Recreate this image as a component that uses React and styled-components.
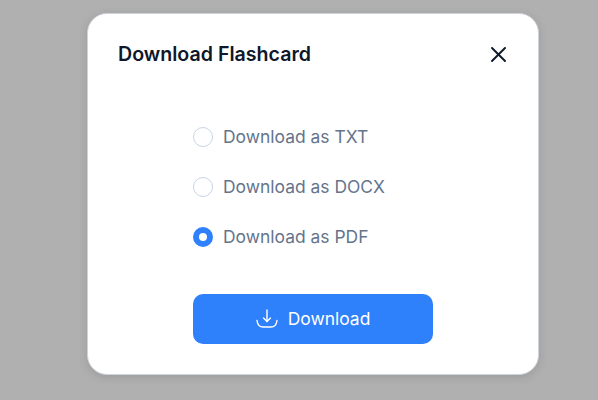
import React from "react";
import styled, { createGlobalStyle } from "styled-components";

const Global = createGlobalStyle`
  html, body { margin: 0; padding: 0; background: #b0b0b0; }
  * { box-sizing: border-box; }
`;
const Overlay = styled.div`
  width: 598px; height: 400px; overflow: hidden;
  background: #b0b0b0;
  padding: 13px 0 0 87px;
  font-family: Inter, "Liberation Sans", sans-serif;
`;
const Modal = styled.div`
  width: 452px; height: 362px;
  background: #fff;
  border-radius: 20px;
  border: 1px solid #cfd4dc;
  box-shadow: 0 2px 8px rgba(60, 60, 60, 0.18);
  padding: 28px 28px 30px 30px;
  display: flex; flex-direction: column;
`;
const Header = styled.div`
  display: flex; align-items: center; justify-content: space-between;
  height: 24px;
`;
const Title = styled.h2`
  margin: 0;
  font-size: 19.6px; line-height: 24px; font-weight: 600; color: #0f172a;
  letter-spacing: 0;
`;
const Close = styled.button`
  all: unset; display: flex; width: 24px; height: 24px;
  align-items: center; justify-content: center; color: #0f172a;
`;
const Body = styled.div`
  margin: 61px 0 0 75px;
  width: 240px;
  display: flex; flex-direction: column;
`;
const Options = styled.div`
  display: flex; flex-direction: column; gap: 30px;
`;
const Option = styled.label`
  display: flex; align-items: center; gap: 10px; height: 20px;
  font-size: 17.45px; line-height: 20px; color: #64748b;
`;
const Radio = styled.span`
  width: 20px; height: 20px; border-radius: 50%; flex: none;
  background: #fff;
  border: ${(p) => (p.$on ? "6px solid #2f80fb" : "1.5px solid #c8d4e5")};
`;
const Button = styled.button`
  all: unset; box-sizing: border-box;
  margin-top: 47px;
  width: 240px; height: 50px;
  border-radius: 10px;
  background: #2f80fb; color: #fff;
  display: flex; align-items: center; justify-content: center; gap: 10px;
  font-size: 17.45px; line-height: 24px; font-weight: 400;
`;

const DownloadIcon = () => (
  <svg width="22" height="20" viewBox="0 0 22 20" fill="none" stroke="currentColor" strokeWidth="1.4" strokeLinecap="round" strokeLinejoin="round">
    <path d="M11 1V12.5" />
    <path d="M7.5 9L11 12.5L14.5 9" />
    <path d="M1 11.5C1.5 15.5 3.5 18 7 18H15C18.5 18 20.5 15.5 21 11.5" />
  </svg>
);
const CloseIcon = () => (
  <svg width="15" height="15" viewBox="0 0 15 15" fill="none" stroke="currentColor" strokeWidth="1.9" strokeLinecap="round">
    <path d="M1 1L14 14" />
    <path d="M14 1L1 14" />
  </svg>
);

const formats = [
  { label: "Download as TXT", on: false },
  { label: "Download as DOCX", on: false },
  { label: "Download as PDF", on: true },
];

export default function App() {
  return (
    <Overlay>
      <Global />
      <Modal>
        <Header>
          <Title>Download Flashcard</Title>
          <Close aria-label="Close"><CloseIcon /></Close>
        </Header>
        <Body>
          <Options>
            {formats.map((f) => (
              <Option key={f.label}>
                <Radio $on={f.on} />
                {f.label}
              </Option>
            ))}
          </Options>
          <Button><DownloadIcon />Download</Button>
        </Body>
      </Modal>
    </Overlay>
  );
}
